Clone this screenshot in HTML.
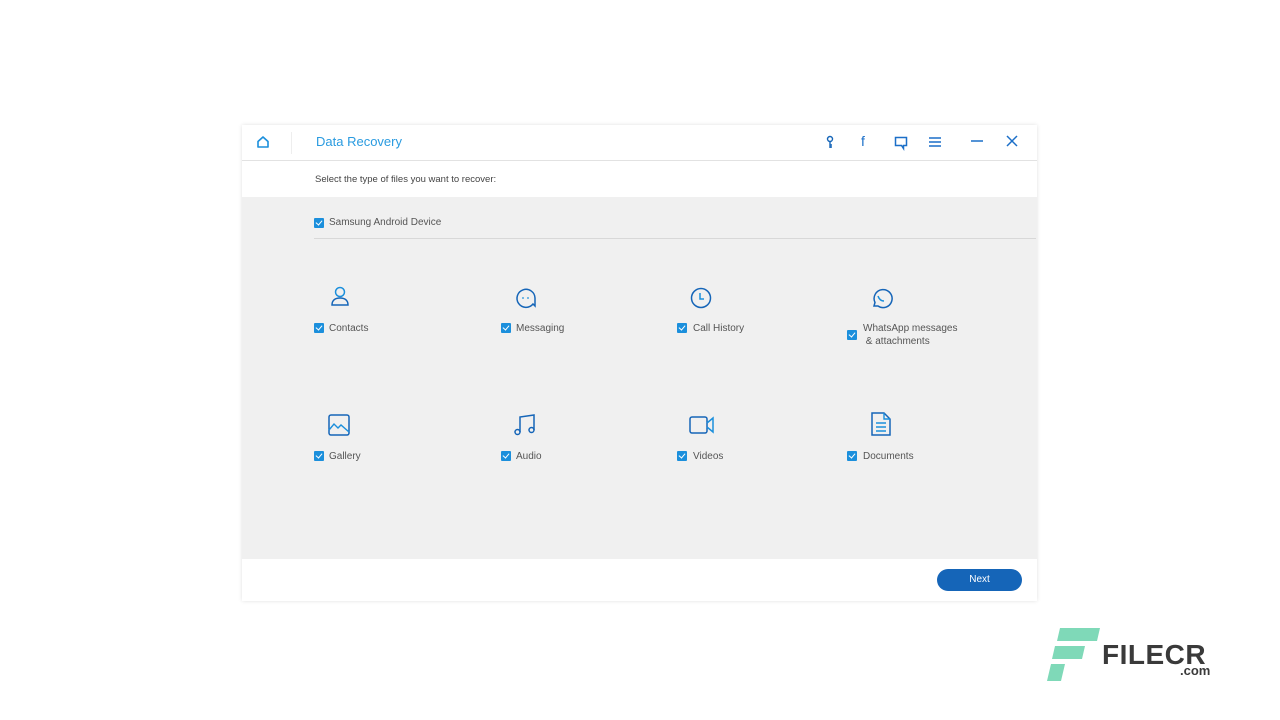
<!DOCTYPE html>
<html><head><meta charset="utf-8"><style>
*{margin:0;padding:0;box-sizing:border-box}
body{width:1280px;height:720px;background:#fff;position:relative;overflow:hidden;font-family:"Liberation Sans",sans-serif}
.win{position:absolute;left:242px;top:125px;width:795px;height:476px;background:#fff;box-shadow:0 0 4px rgba(0,0,0,.12)}
.hdr{position:absolute;left:0;top:0;width:795px;height:36px;border-bottom:1px solid #e2e2e2}
.title{position:absolute;left:74px;top:9px;font-size:13px;color:#2a9be0}
.sep{position:absolute;left:49px;top:7px;width:1px;height:22px;background:#eee}
.sub{position:absolute;left:73px;top:49px;font-size:9.5px;color:#444}
.gray{position:absolute;left:0;top:72px;width:795px;height:362px;background:#f0f0f0}
.cb{position:absolute;width:10px;height:10px;background:#1b8fdc;border-radius:1px}
.cb:after{content:"";position:absolute;left:3px;top:1px;width:3px;height:5px;border:solid #fff;border-width:0 1.3px 1.3px 0;transform:rotate(40deg)}
.lbl{position:absolute;font-size:10px;color:#555;line-height:13px}
.line{position:absolute;left:72px;top:113px;width:722px;height:1px;background:#d8d8d8}
svg.ic{position:absolute;overflow:visible}
.next{position:absolute;left:695px;top:444px;width:85px;height:22px;border-radius:11px;background:#1565b8;color:#fff;font-size:10px;text-align:center;line-height:22px}
</style></head><body>
<div class="win">
 <div class="hdr">
  <svg class="ic" style="left:14px;top:10px" width="14" height="14" viewBox="0 0 14 14"><path d="M2 6.5L7 2l5 4.5V12H2z" fill="none" stroke="#1b8fdc" stroke-width="1.6" stroke-linejoin="round"/></svg>
  <div class="sep"></div>
  <div class="title">Data Recovery</div>
  <svg class="ic" style="left:583px;top:10px" width="10" height="14" viewBox="0 0 10 14"><circle cx="5" cy="4" r="2.5" fill="none" stroke="#1565b8" stroke-width="1.4"/><path d="M5 6.5V13M5 10h2M5 12h2" stroke="#1565b8" stroke-width="1.4"/></svg>
  <div style="position:absolute;left:619px;top:8px;font-size:14px;color:#1b6fc8">f</div>
  <svg class="ic" style="left:652px;top:11px" width="14" height="14" viewBox="0 0 14 14"><path d="M1.5 1.5h11v8h-3v3l-2-3h-6z" fill="none" stroke="#1b6fc8" stroke-width="1.5"/></svg>
  <svg class="ic" style="left:687px;top:12px" width="12" height="10" viewBox="0 0 12 10"><path d="M0 1h12M0 5h12M0 9h12" stroke="#1b6fc8" stroke-width="1.5"/></svg>
  <svg class="ic" style="left:729px;top:15px" width="12" height="2"><path d="M0 1h12" stroke="#1b6fc8" stroke-width="1.5"/></svg>
  <svg class="ic" style="left:765px;top:11px" width="10" height="10" viewBox="0 0 10 10"><path d="M0 0L10 10M10 0L0 10" stroke="#1b6fc8" stroke-width="1.5"/></svg>
 </div>
 <div class="sub">Select the type of files you want to recover:</div>
 <div class="gray">
  <div class="cb" style="left:72px;top:21px"></div><div class="lbl" style="left:87px;top:19px">Samsung Android Device</div>
  <div class="line" style="top:41px"></div>
 </div>
 <svg class="ic" style="left:88px;top:161px" width="20" height="20" viewBox="0 0 20 20"><circle cx="10" cy="6" r="4.5" fill="none" stroke="#1b8fdc" stroke-width="1.5"/><path d="M2 19c0-5 3.5-7 8-7s8 2 8 7z" fill="none" stroke="#1565b8" stroke-width="1.5"/></svg>
 <svg class="ic" style="left:273px;top:162px" width="22" height="22" viewBox="0 0 22 22"><path d="M18 17A9 9 0 1 1 20 11v8z" fill="none" stroke="#1565b8" stroke-width="1.5"/><circle cx="8" cy="11" r=".9" fill="#1b8fdc"/><circle cx="13" cy="11" r=".9" fill="#1b8fdc"/></svg>
 <svg class="ic" style="left:448px;top:162px" width="22" height="22" viewBox="0 0 22 22"><circle cx="11" cy="11" r="9.5" fill="none" stroke="#1565b8" stroke-width="1.5"/><path d="M10 6v6h4" fill="none" stroke="#1b8fdc" stroke-width="1.5"/></svg>
 <svg class="ic" style="left:628px;top:162px" width="22" height="22" viewBox="0 0 22 22"><path d="M4 19l1-3.5A9 9 0 1 1 8 19z" fill="none" stroke="#1565b8" stroke-width="1.5"/><path d="M8 9c1 3 3 5 6 5" fill="none" stroke="#1b8fdc" stroke-width="1.5"/></svg>
 <div class="cb" style="left:72px;top:198px"></div><div class="lbl" style="left:87px;top:197px">Contacts</div>
 <div class="cb" style="left:259px;top:198px"></div><div class="lbl" style="left:274px;top:197px">Messaging</div>
 <div class="cb" style="left:435px;top:198px"></div><div class="lbl" style="left:451px;top:197px">Call History</div>
 <div class="cb" style="left:605px;top:205px"></div><div class="lbl" style="left:621px;top:197px">WhatsApp messages<br>&nbsp;&amp; attachments</div>
 <svg class="ic" style="left:86px;top:289px" width="22" height="22" viewBox="0 0 22 22"><rect x="1" y="1" width="20" height="20" rx="2" fill="none" stroke="#1565b8" stroke-width="1.5"/><path d="M1 16l5-6 4 4 3-3 8 7" fill="none" stroke="#1b8fdc" stroke-width="1.4"/></svg>
 <svg class="ic" style="left:272px;top:289px" width="22" height="22" viewBox="0 0 22 22"><path d="M6 18V3l14-2v15" fill="none" stroke="#1565b8" stroke-width="1.5"/><circle cx="3.5" cy="18" r="2.5" fill="none" stroke="#1565b8" stroke-width="1.5"/><circle cx="17.5" cy="16" r="2.5" fill="none" stroke="#1565b8" stroke-width="1.5"/></svg>
 <svg class="ic" style="left:447px;top:291px" width="26" height="18" viewBox="0 0 26 18"><rect x="1" y="1" width="17" height="16" rx="2" fill="none" stroke="#1565b8" stroke-width="1.5"/><path d="M18 7l6-5v14l-6-5" fill="none" stroke="#1b8fdc" stroke-width="1.5"/></svg>
 <svg class="ic" style="left:629px;top:287px" width="20" height="24" viewBox="0 0 20 24"><path d="M1 1h12l6 6v16H1z" fill="none" stroke="#1565b8" stroke-width="1.5"/><path d="M13 1v6h6M5 11h10M5 15h10M5 19h10" fill="none" stroke="#1b8fdc" stroke-width="1.4"/></svg>
 <div class="cb" style="left:72px;top:326px"></div><div class="lbl" style="left:87px;top:325px">Gallery</div>
 <div class="cb" style="left:259px;top:326px"></div><div class="lbl" style="left:274px;top:325px">Audio</div>
 <div class="cb" style="left:435px;top:326px"></div><div class="lbl" style="left:451px;top:325px">Videos</div>
 <div class="cb" style="left:605px;top:326px"></div><div class="lbl" style="left:621px;top:325px">Documents</div>
 <div class="next">Next</div>
</div>
<svg style="position:absolute;left:1046px;top:628px" width="62" height="54" viewBox="0 0 62 54"><path d="M14 0h40l-3 13H11zM9 18h30l-3 13H6zM5 36h14l-4 17H1z" fill="#7fd9b8"/></svg>
<div style="position:absolute;left:1102px;top:639px;font-size:28px;font-weight:bold;color:#3a3a3a;letter-spacing:.5px">FILECR</div>
<div style="position:absolute;left:1180px;top:663px;font-size:13px;font-weight:bold;color:#3a3a3a">.com</div>
</body></html>
